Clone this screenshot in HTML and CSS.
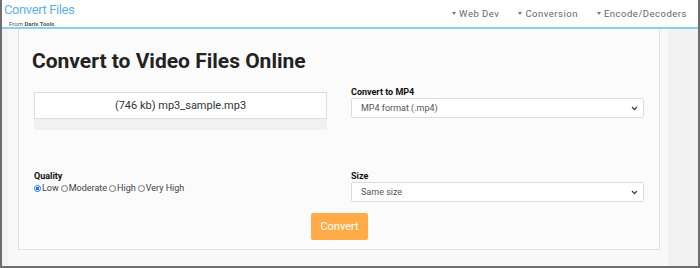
FILE: index.html
```html
<!DOCTYPE html>
<html lang="en">
<head>
    <meta charset="UTF-8">
    <title>Convert Files</title>
    <link rel="stylesheet" href="styles.css">
</head>
<body>
    <header class="topbar">
        <div class="brand">
            <div class="brand-name">Convert Files</div>
            <div class="brand-sub">From <b>Daris Tools</b></div>
        </div>
        <nav class="menu">
            <span class="menu-item"><i class="caret"></i>Web Dev</span>
            <span class="menu-item"><i class="caret"></i>Conversion</span>
            <span class="menu-item"><i class="caret"></i>Encode/Decoders</span>
        </nav>
    </header>

    <div class="main">
        <div class="gutter"></div>
        <div class="panel">
            <h1>Convert to Video Files Online</h1>

            <div class="row">
                <div class="col">
                    <div class="file-box">(746 kb) mp3_sample.mp3</div>
                    <div class="progress"></div>
                </div>
                <div class="col">
                    <label class="field-label">Convert to MP4</label>
                    <div class="select">
                        <span>MP4 format (.mp4)</span>
                        <svg class="chev" width="7" height="5" viewBox="0 0 7 5"><path d="M1 1l2.5 2.5L6 1" fill="none" stroke="#444" stroke-width="1.3"/></svg>
                    </div>
                </div>
            </div>

            <div class="row row-options">
                <div class="col">
                    <label class="field-label">Quality</label>
                    <div class="radios">
                        <span class="radio checked"></span>Low
                        <span class="radio"></span>Moderate
                        <span class="radio"></span>High
                        <span class="radio"></span>Very High
                    </div>
                </div>
                <div class="col">
                    <label class="field-label">Size</label>
                    <div class="select">
                        <span>Same size</span>
                        <svg class="chev" width="7" height="5" viewBox="0 0 7 5"><path d="M1 1l2.5 2.5L6 1" fill="none" stroke="#444" stroke-width="1.3"/></svg>
                    </div>
                </div>
            </div>

            <div class="actions">
                <button class="convert-btn">Convert</button>
            </div>
        </div>
        <div class="side"></div>
    </div>
</body>
</html>
```

FILE: styles.css
```css
html, body {
    height: 100%;
}
body {
    margin: 0;
    font-family: Roboto, 'Liberation Sans', sans-serif;
    background: #f9f9f9;
    border: 2px solid #6e6e6e;
    border-top: none;
    box-sizing: border-box;
    display: flex;
    flex-direction: column;
    overflow: hidden;
}
.topbar {
    height: 27px;
    background: #fff;
    border-bottom: 2px solid #84d2ee;
    display: flex;
    justify-content: space-between;
    align-items: flex-start;
    flex-shrink: 0;
}
.brand {
    padding-left: 2px;
}
.brand-name {
    color: #5bb3e4;
    font-size: 13px;
    letter-spacing: -0.4px;
    line-height: 16px;
    margin-top: 2px;
}
.brand-sub {
    font-size: 6px;
    color: #555;
    padding-left: 5px;
    margin-top: 2px;
}
.menu {
    display: flex;
    gap: 19px;
    padding-right: 11px;
    padding-top: 8px;
}
.menu-item {
    font-size: 9.5px;
    color: #666;
    letter-spacing: 0.5px;
    display: flex;
    align-items: center;
}
.caret {
    width: 0;
    height: 0;
    border-left: 2.5px solid transparent;
    border-right: 2.5px solid transparent;
    border-top: 3px solid #777;
    margin-right: 3px;
}
.main {
    flex: 1;
    display: flex;
    min-height: 0;
}
.gutter {
    width: 16px;
    border-left: 6px solid #f3f3f3;
    box-sizing: border-box;
}
.panel {
    width: 642px;
    height: 221px;
    box-sizing: border-box;
    background: #fbfbfb;
    border: 1px solid #e2e2e2;
    border-top: none;
    padding: 20px 15px 0 15px;
}
.side {
    flex: 1;
    margin-left: 8px;
    background: #f2f2f2;
}
h1 {
    margin: 0 0 19px -2px;
    font-size: 21px;
    font-weight: 700;
    color: #222;
    line-height: 24px;
}
.row {
    display: flex;
    gap: 24px;
}
.col {
    flex: 1;
}
.file-box {
    height: 27px;
    box-sizing: border-box;
    background: #fff;
    border: 1px solid #ddd;
    font-size: 11px;
    color: #333;
    display: flex;
    align-items: center;
    justify-content: center;
}
.progress {
    height: 11px;
    background: #f1f1f1;
}
.field-label {
    display: block;
    font-size: 9px;
    font-weight: 700;
    color: #111;
    line-height: 11px;
    margin-top: -5px;
}
.select {
    height: 20px;
    box-sizing: border-box;
    background: #fff;
    border: 1px solid #dcdcdc;
    border-radius: 2px;
    font-size: 9px;
    color: #555;
    display: flex;
    align-items: center;
    justify-content: space-between;
    padding: 0 5px 0 9px;
}
.row-options {
    margin-top: 41px;
}
.row-options .field-label {
    margin-top: 0;
}
.radios {
    font-size: 9px;
    color: #444;
    line-height: 12px;
    display: flex;
    align-items: center;
}
.radio {
    width: 7px;
    height: 7px;
    border: 1px solid #777;
    border-radius: 50%;
    margin: 0 1px 0 2px;
    box-sizing: border-box;
}
.radio:first-child {
    margin-left: 0;
}
.radio.checked {
    border: 1px solid #1a73e8;
    background: radial-gradient(circle, #1a73e8 45%, #fff 55%);
}
.actions {
    display: flex;
    justify-content: center;
    margin-top: 11px;
}
.convert-btn {
    background: #ffac48;
    color: #fff;
    border: none;
    border-radius: 2px;
    font-family: inherit;
    font-size: 11px;
    width: 57px;
    height: 27px;
    margin-left: 1px;
    cursor: pointer;
}
```
